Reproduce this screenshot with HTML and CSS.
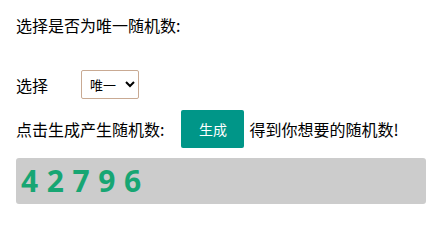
FILE: index.html
```html
<!DOCTYPE html>
<html lang="zh">
<head>
<meta charset="utf-8">
<title>随机数</title>
<link rel="stylesheet" href="styles.css">
</head>
<body>
<div class="page">
  <div class="line title">选择是否为唯一随机数:</div>
  <div class="row pick">
    <span class="label">选择</span>
    <select class="sel">
      <option>唯一</option>
      <option>不唯一</option>
    </select>
  </div>
  <div class="row gen">
    <span>点击生成产生随机数:</span>
    <button class="btn">生成</button>
    <span class="after">得到你想要的随机数!</span>
  </div>
  <div class="result">4 2 7 9 6</div>
</div>
</body>
</html>
```
FILE: styles.css
```css
html, body {
  margin: 0;
  padding: 0;
  background: #fff;
}
body {
  font-family: "Noto Sans CJK SC", "Noto Sans", sans-serif;
  font-size: 16px;
  color: #000;
}
.page {
  display: flex;
  flex-direction: column;
  padding: 0 4px 0 16px;
}
.line {
  height: 24px;
  line-height: 24px;
}
.title {
  margin-top: 13px;
}
.row {
  display: flex;
  align-items: center;
}
.pick {
  margin-top: 33px;
  height: 29px;
}
.label {
  width: 65px;
}
.sel {
  width: 58px;
  height: 29px;
  border: 1px solid #c9aa93;
  border-radius: 2px;
  background: #fff;
  font-family: "Noto Sans CJK SC", sans-serif;
  font-size: 13px;
  padding: 0 4px;
  color: #000;
}
.gen {
  margin-top: 11px;
  height: 38px;
}
.btn {
  width: 63px;
  height: 38px;
  margin-left: 17px;
  background: #009688;
  color: #fff;
  border: none;
  border-radius: 2px;
  font-family: "Noto Sans CJK SC", sans-serif;
  font-size: 14px;
  padding: 0;
}
.after {
  margin-left: 5px;
}
.result {
  margin-top: 10px;
  height: 46px;
  line-height: 46px;
  background: #cccccc;
  border-radius: 3px;
  padding-left: 5px;
  font-family: "Open Sans", sans-serif;
  font-weight: 700;
  font-size: 30px;
  letter-spacing: 0.4px;
  color: #17a673;
}
```
